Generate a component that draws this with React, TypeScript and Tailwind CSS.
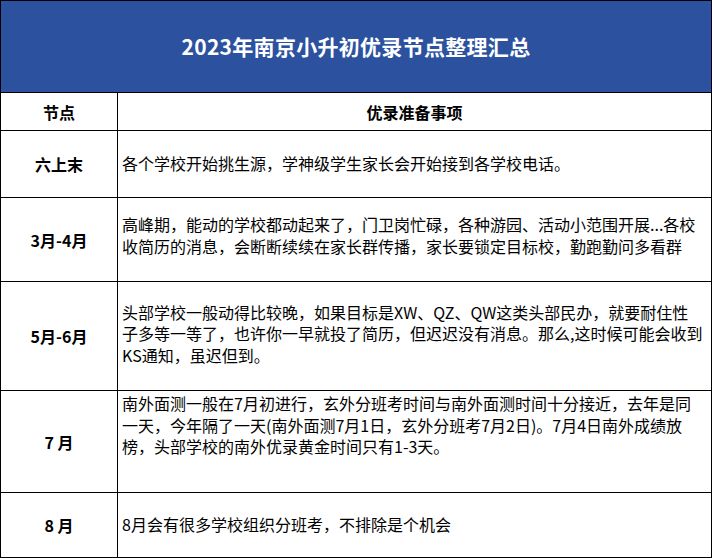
import React from "react";

const font = { fontFamily: '"Noto Sans CJK SC", "Noto Sans", sans-serif' };

function Row({
  label,
  lines,
  h,
  align = "center",
  last = false,
  extra = "",
}: {
  label: string;
  lines: string[];
  h: string;
  align?: "center" | "start";
  last?: boolean;
  extra?: string;
}) {
  return (
    <div className={`flex ${h} ${last ? "" : "border-b border-black"}`}>
      <div className="w-[117px] shrink-0 border-r border-black flex items-center justify-center text-[16px] font-bold text-black">
        {label}
      </div>
      <div
        className={`flex-1 flex ${align === "center" ? "items-center" : "items-start pt-[2px]"} px-[4px] ${extra}`}
      >
        <div className="text-[16px] leading-[21.5px] text-black whitespace-nowrap">
          {lines.map((l, i) => (
            <div key={i}>{l}</div>
          ))}
        </div>
      </div>
    </div>
  );
}

export default function App() {
  return (
    <div
      className="w-[712px] h-[558px] border border-black bg-white flex flex-col overflow-hidden"
      style={font}
    >
      <div className="h-[92px] shrink-0 bg-[#2c529f] border-b border-black flex items-center justify-center">
        <span className="text-white font-bold text-[21px] tracking-[0.3px]">
          2023年南京小升初优录节点整理汇总
        </span>
      </div>
      <div className="flex h-[38px] shrink-0 border-b border-black">
        <div className="w-[117px] shrink-0 border-r border-black flex items-center justify-center text-[16px] font-bold text-black">
          节点
        </div>
        <div className="flex-1 flex items-center justify-center text-[16px] font-bold text-black">
          优录准备事项
        </div>
      </div>
      <Row
        label="六上末"
        h="h-[67px] shrink-0"
        lines={["各个学校开始挑生源，学神级学生家长会开始接到各学校电话。"]}
      />
      <Row
        label="3月-4月"
        h="h-[84px] shrink-0"
        extra="pb-[8px]"
        lines={[
          "高峰期，能动的学校都动起来了，门卫岗忙碌，各种游园、活动小范围开展...各校",
          "收简历的消息，会断断续续在家长群传播，家长要锁定目标校，勤跑勤问多看群",
        ]}
      />
      <Row
        label="5月-6月"
        h="h-[109px] shrink-0"
        extra="pb-[4px]"
        lines={[
          "头部学校一般动得比较晚，如果目标是XW、QZ、QW这类头部民办，就要耐住性",
          "子多等一等了，也许你一早就投了简历，但迟迟没有消息。那么,这时候可能会收到",
          "KS通知，虽迟但到。",
        ]}
      />
      <Row
        label="7 月"
        h="h-[102px] shrink-0"
        align="start"
        lines={[
          "南外面测一般在7月初进行，玄外分班考时间与南外面测时间十分接近，去年是同",
          "一天，今年隔了一天(南外面测7月1日，玄外分班考7月2日)。7月4日南外成绩放",
          "榜，头部学校的南外优录黄金时间只有1-3天。",
        ]}
      />
      <Row
        label="8 月"
        h="flex-1"
        last
        lines={["8月会有很多学校组织分班考，不排除是个机会"]}
      />
    </div>
  );
}
